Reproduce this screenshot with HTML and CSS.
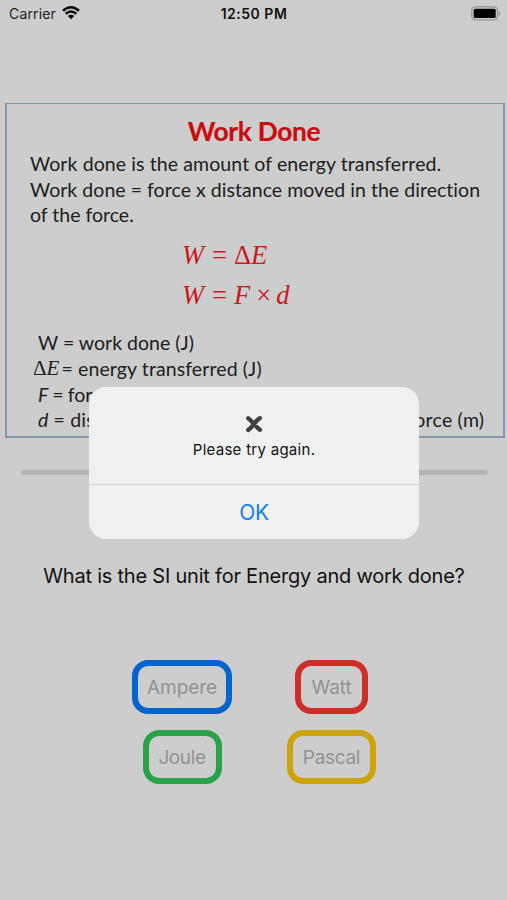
FILE: index.html
```html
<!DOCTYPE html>
<html lang="en">
<head>
<meta charset="utf-8">
<title>Work Done</title>
<link rel="stylesheet" href="styles.css">
</head>
<body>
<main class="screen">
  <header class="status">
    <div class="carrier"><span>Carrier</span>
      <svg class="wifi" width="18" height="14" viewBox="0 0 18 14" aria-hidden="true"><path d="M1 4.8Q9-2.2 17 4.8M3.7 7.7Q9 3.2 14.3 7.7" fill="none" stroke="#080808" stroke-width="2.5"/><path d="M5.8 10Q9 7.3 12.2 10L9 13.3Z" fill="#080808"/></svg>
    </div>
    <div class="time">12:50 PM</div>
    <svg class="battery" width="30" height="15" viewBox="0 0 30 15" aria-hidden="true"><rect x=".8" y=".8" width="25.7" height="13" rx="3.8" fill="none" stroke="#929292" stroke-width="1.3"/><rect x="2.7" y="2.7" width="22" height="9.2" rx="1.5" fill="#000"/><path d="M27.8 5v4.8q1.6-.8 1.6-2.4T27.8 5Z" fill="#929292"/></svg>
  </header>
  <section class="lesson">
    <h1>Work Done</h1>
    <div class="intro">
      <p class="l1">Work done is the amount of energy transferred.</p>
      <p class="l2">Work done = force x distance moved in the direction</p>
      <p class="l3">of the force.</p>
    </div>
    <div class="formulas">
      <p><i>W</i><span class="eq">=</span>Δ<i>E</i></p>
      <p><i>W</i><span class="eq">=</span><i>F</i><span class="times">×</span><i>d</i></p>
    </div>
    <div class="terms">
      <p class="t1">W = work done (J)</p>
      <p class="t2"><span class="delta">Δ<i>E</i></span><span>= energy transferred (J)</span></p>
      <p class="t3"><i>F</i> = force (N)</p>
      <p class="t4"><i>d</i> = distance moved in the direction of the force (m)</p>
    </div>
  </section>
  <div class="progress"></div>
  <h2>What is the SI unit for Energy and work done?</h2>
  <div class="answers">
    <div class="row"><button class="ampere">Ampere</button><button class="watt">Watt</button></div>
    <div class="row"><button class="joule">Joule</button><button class="pascal">Pascal</button></div>
  </div>
  <div class="alert" role="alertdialog">
    <div class="message">
      <svg width="18" height="18" viewBox="0 0 18 18" aria-hidden="true"><path d="M3.2 3.2Q6 5.3 9 9Q12 12.5 15 14.7M14.9 3.1Q11.5 5.2 9 9Q6.5 12.5 3.2 15" fill="none" stroke="#404142" stroke-width="4.2" stroke-linecap="round"/></svg>
      <p>Please try again.</p>
    </div>
    <button class="ok">OK</button>
  </div>
</main>
</body>
</html>
```
FILE: styles.css
```css
* { box-sizing: border-box; }
body { margin: 0; background: #cdcdcd; color: #111; font-family: Inter, "Liberation Sans", sans-serif; }
h1, h2, p { margin: 0; }
p, h1, h2 { white-space: nowrap; }
button { font: inherit; padding: 0; background: none; }
.screen { position: relative; width: 507px; height: 900px; overflow: hidden; }
.status { height: 103px; display: grid; grid-template-columns: 1fr auto 1fr; align-items: start; padding: 6px 6px 0 9px; line-height: 16px; }
.carrier { display: flex; gap: 6px; font-size: 14px; letter-spacing: .15px; color: #222; }
.time { font-size: 14px; font-weight: 600; letter-spacing: .5px; margin-right: 2px; }
.battery { justify-self: end; }
.lesson { width: 500px; height: 335px; margin-left: 5px; border: 2px solid #8297ac; border-width: 1.5px 2px 2px; padding-top: 13px; font-family: Lato, sans-serif; font-size: 19.5px; line-height: 25.7px; color: #202020; }
.lesson h1 { text-align: center; font-size: 26.3px; line-height: 29px; letter-spacing: -.3px; color: #cb0b0e; font-weight: 700; -webkit-text-stroke: .2px #cb0b0e; padding-right: 2px; }
.intro { padding: 5px 0 0 23px; }
.l1 { letter-spacing: .1px; }
.l2 { letter-spacing: .04px; }
.formulas { padding: 8px 0 0 175px; font-family: "Liberation Serif", serif; font-size: 26.5px; line-height: 39.5px; color: #c8191d; }
.eq { margin: 0 7px 0 8px; }
.times { margin: 0 5px 0 6px; }
.terms { padding: 15px 0 0 31px; }
.t1 { letter-spacing: 0; }
.t2 { display: flex; margin-left: -5px; letter-spacing: .1px; }
.delta { font-family: "Liberation Serif", serif; font-size: 21px; margin-right: 2px; }
.t3 { word-spacing: -1px; }
.t4 { letter-spacing: .28px; word-spacing: -.3px; }
.progress { width: 467px; height: 5px; border-radius: 3px; margin: 32px 0 0 21px; background: #b4b4b4; }
h2 { margin-top: 86px; padding-left: 1px; text-align: center; font-size: 20px; line-height: 30px; font-weight: 400; letter-spacing: -.22px; }
.answers { margin: 69px 0 0 91px; display: grid; gap: 16px; width: 300px; }
.row { display: grid; grid-template-columns: 182px 118px; justify-items: center; }
.row button { height: 54px; border: 6px solid; border-radius: 16px; font-size: 19px; letter-spacing: -.1px; color: #929292; }
.row .ampere { width: 100px; border-color: #0563cc; }
.row .watt { width: 73px; border-color: #cd2e29; margin-left: -1px; }
.row .joule { width: 79px; border-color: #29a347; letter-spacing: -.4px; }
.row .pascal { width: 89px; border-color: #cca408; letter-spacing: -.3px; margin-left: -1px; }
.alert { position: absolute; left: 89px; top: 387px; width: 330px; height: 152px; border-radius: 17px; background: #eff0f0; overflow: hidden; display: flex; flex-direction: column; }
.message { height: 98px; border-bottom: 1px solid #cfd1d1; padding-top: 28px; text-align: center; font-size: 15px; line-height: 20px; letter-spacing: .28px; }
.message svg { display: block; margin: 0 auto 7px; }
.ok { flex: 1; border: 0; color: #147df5; font-size: 21px; letter-spacing: -.4px; }
```
